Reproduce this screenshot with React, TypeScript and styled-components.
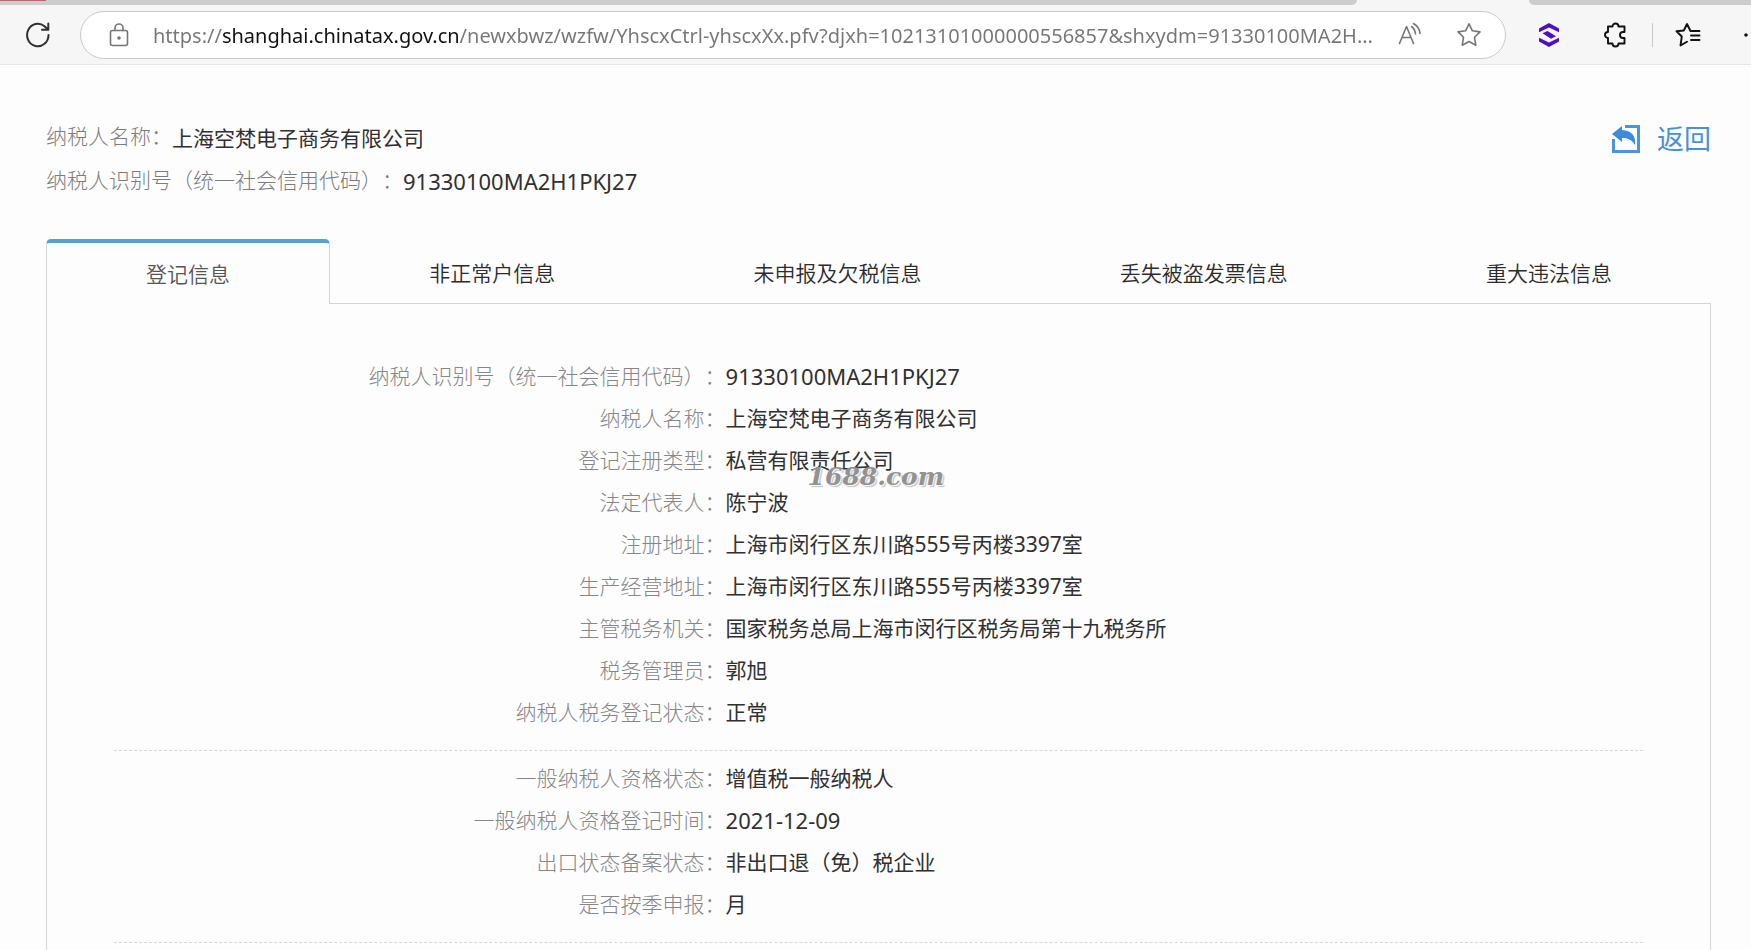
import React from "react";
import styled, { createGlobalStyle } from "styled-components";

const Global = createGlobalStyle`
  *, *::before, *::after { box-sizing: border-box; }
  html, body { margin: 0; }
  body {
    background: #fdfdfd;
    color: #303030;
    font-family: "Noto Sans", "Noto Sans CJK SC", sans-serif;
    font-size: 21px;
    line-height: 42px;
    text-spacing-trim: space-all;
    overflow: hidden;
  }
`;

const Window = styled.div`
  display: flex;
  flex-direction: column;
  height: 100vh;
  overflow: hidden;
`;

const TabStrip = styled.div`
  display: flex;
  justify-content: space-between;
  flex: none;
  height: 5px;
  background: #f6f6f6;
`;

const StripPiece = styled.div<{ $side: "left" | "right" }>`
  width: ${(p) => (p.$side === "left" ? "77.5%" : "12.7%")};
  background: #cdcdcd;
  border-radius: ${(p) => (p.$side === "left" ? "0 0 5px 0" : "0 0 0 5px")};
`;

const RedEdge = styled.div`
  width: 46px;
  height: 1px;
  background: #b9686c;
`;

const Toolbar = styled.header`
  display: flex;
  align-items: center;
  flex: none;
  height: 60px;
  padding: 0 0 0 26px;
  background: #f6f6f6;
  border-bottom: 1px solid #e6e6e6;
  overflow: hidden;
`;

const IconButton = styled.button`
  display: flex;
  flex: none;
  padding: 0;
  border: 0;
  background: none;
  color: inherit;
  cursor: pointer;
`;

const AddressBar = styled.div`
  display: flex;
  align-items: center;
  flex: 1;
  min-width: 0;
  height: 48px;
  margin: 0 33px 0 30px;
  padding: 0 23px 0 28px;
  gap: 24px;
  color: #767676;
  background: #fff;
  border: 1px solid #cacaca;
  border-radius: 24px;
`;

const AddressInput = styled.input`
  flex: 1;
  min-width: 0;
  height: 40px;
  padding: 2px 0 0;
  border: 0;
  outline: 0;
  font: inherit;
  font-size: 20px;
  text-overflow: ellipsis;
  color: #767676;
  background: linear-gradient(90deg, #767676 69px, #111 69px, #111 306px, #767676 306px);
  background-clip: text;
  -webkit-text-fill-color: transparent;
`;

const AddressActions = styled.div`
  display: flex;
  gap: 34px;
`;

const Extensions = styled.div`
  display: flex;
  align-items: center;
  flex: none;
  color: #111;
`;

const ExtensionSlot = styled.div<{ $width: number }>`
  display: flex;
  width: ${(p) => p.$width}px;
`;

const Separator = styled.span`
  width: 1px;
  height: 24px;
  background: #c8c8c8;
`;

const Page = styled.main`
  display: flex;
  flex-direction: column;
  flex: 1;
  padding: 50px 40px 0 46px;
`;

const Summary = styled.div`
  display: flex;
  justify-content: space-between;
  align-items: flex-start;
  margin-bottom: 36px;
`;

const SummaryList = styled.dl`
  margin: 0;
`;

const SummaryRow = styled.div`
  display: flex;
  height: 44px;
`;

const SummaryLabel = styled.dt`
  color: #7c7c7c;
  font-weight: 300;
`;

const SummaryValue = styled.dd<{ $code?: boolean }>`
  margin: 0;
  padding-top: ${(p) => (p.$code ? 1 : 2)}px;
  font-size: ${(p) => (p.$code ? 22 : 21)}px;
`;

const BackLink = styled.a`
  display: flex;
  align-items: center;
  gap: 17px;
  height: 48px;
  color: #4a90d9;
  font-size: 27px;
  text-decoration: none;
`;

const Tabs = styled.div`
  display: flex;
  height: 65px;
`;

const Tab = styled.button<{ $active?: boolean }>`
  flex: 1 1 auto;
  padding: ${(p) => (p.$active ? "0" : "4px 0 0")};
  font: inherit;
  font-weight: 350;
  line-height: 60px;
  color: ${(p) => (p.$active ? "#555" : "#2b2b2b")};
  background: none;
  border: 0 solid #d4d4d4;
  border-width: ${(p) => (p.$active ? "4px 1px 0" : "0 0 1px")};
  border-top-color: #5a9fd4;
  border-radius: ${(p) => (p.$active ? "5px 5px 0 0" : "0")};
  cursor: pointer;
`;

const Panel = styled.section`
  flex: 1;
  padding: 45px 67px 0;
  border: solid #d4d4d4;
  border-width: 0 1px;
`;

const Group = styled.dl`
  margin: 0;
  padding: 6px 0 17px;
  border-bottom: 1px dashed #d8d8d8;
`;

const Row = styled.div`
  display: grid;
  grid-template-columns: 40% 1fr;
  height: 42px;
`;

const Label = styled.dt`
  text-align: right;
  color: #868686;
  font-weight: 300;
  white-space: nowrap;
`;

const Value = styled.dd<{ $code?: boolean }>`
  position: relative;
  margin: 0;
  font-size: ${(p) => (p.$code ? 22 : 21)}px;
`;

const Watermark = styled.span`
  position: absolute;
  left: 82px;
  top: 17px;
  color: #929292;
  font: italic bold 25px/42px "DejaVu Serif", serif;
  text-shadow: 1px 1px 1px #fff, 2px 2px 1px #bbb;
  pointer-events: none;
`;

const stroke = { fill: "none", stroke: "currentColor", strokeWidth: 1.6, strokeLinejoin: "round", strokeLinecap: "round" } as const;

const groups: { label: string; value: string; code?: boolean; mark?: string }[][] = [
  [
    { label: "纳税人识别号（统一社会信用代码）：", value: "91330100MA2H1PKJ27", code: true },
    { label: "纳税人名称：", value: "上海空梵电子商务有限公司" },
    { label: "登记注册类型：", value: "私营有限责任公司", mark: "1688.com" },
    { label: "法定代表人：", value: "陈宁波" },
    { label: "注册地址：", value: "上海市闵行区东川路555号丙楼3397室" },
    { label: "生产经营地址：", value: "上海市闵行区东川路555号丙楼3397室" },
    { label: "主管税务机关：", value: "国家税务总局上海市闵行区税务局第十九税务所" },
    { label: "税务管理员：", value: "郭旭" },
    { label: "纳税人税务登记状态：", value: "正常" },
  ],
  [
    { label: "一般纳税人资格状态：", value: "增值税一般纳税人" },
    { label: "一般纳税人资格登记时间：", value: "2021-12-09", code: true },
    { label: "出口状态备案状态：", value: "非出口退（免）税企业" },
    { label: "是否按季申报：", value: "月" },
  ],
];

const tabs = ["登记信息", "非正常户信息", "未申报及欠税信息", "丢失被盗发票信息", "重大违法信息"];

export default function App() {
  return (
    <Window>
      <Global />
      <TabStrip>
        <StripPiece $side="left"><RedEdge /></StripPiece>
        <StripPiece $side="right" />
      </TabStrip>
      <Toolbar>
        <IconButton aria-label="刷新">
          <svg width="24" height="26" viewBox="0 0 24 26" {...stroke} strokeWidth={2}>
            <path d="M22.5 13A10.7 11.3 0 1 1 18.5 4.2L22 7.5M22.3 1.5V7.8H16" />
          </svg>
        </IconButton>
        <AddressBar>
          <svg width="20" height="24" viewBox="0 0 20 24" {...stroke}>
            <rect x="1.5" y="7.5" width="17" height="15" rx="2" />
            <path d="M6 7.5V5a4 4 0 0 1 8 0V7.5" />
            <circle cx="10" cy="15" r="1" fill="currentColor" />
          </svg>
          <AddressInput
            aria-label="地址"
            defaultValue="https://shanghai.chinatax.gov.cn/newxbwz/wzfw/YhscxCtrl-yhscxXx.pfv?djxh=10213101000000556857&shxydm=91330100MA2H..."
          />
          <AddressActions>
            <IconButton aria-label="朗读">
              <svg width="24" height="24" viewBox="0 0 24 24" {...stroke}>
                <path d="M1.5 21.5L8.5 4.5L15.5 21.5M4 15.5H13M13.5 4.5Q17 7 17.5 12M15.5 1.5Q21.5 5 22 11.5" />
              </svg>
            </IconButton>
            <IconButton aria-label="收藏">
              <svg width="26" height="26" viewBox="0 0 26 26" {...stroke}>
                <path d="M13 1.8L16.4 8.8L24 9.9L18.5 15.3L19.8 23.2L13 19.5L6.2 23.2L7.5 15.3L2 9.9L9.6 8.8Z" />
              </svg>
            </IconButton>
          </AddressActions>
        </AddressBar>
        <Extensions>
          <ExtensionSlot $width={65}>
            <IconButton aria-label="扩展">
              <svg width="20" height="24" viewBox="0 0 20 24" fill="#4b12c4">
                <path d="M0 5.5L10 0L20 5.5V9.2L10 4.5L0 9.2ZM0 14.8L10 19.5L20 14.8V18.5L10 24L0 18.5ZM3.500 10.200L8.500 8L17 13.300L12 15.800Z" />
              </svg>
            </IconButton>
          </ExtensionSlot>
          <ExtensionSlot $width={48}>
            <IconButton aria-label="扩展管理">
              <svg width="23" height="26" viewBox="0 0 23 26" {...stroke} strokeWidth={1.9}>
                <path d="M4 4.500H8.500A3 3 0 0 1 14.500 4.500H20.500V10H19A2.900 2.900 0 0 0 19 16H20.500V21.500H14.500A3 3 0 0 1 8.500 21.500H4V16A3 3 0 0 1 4 10Z" />
              </svg>
            </IconButton>
          </ExtensionSlot>
          <ExtensionSlot $width={23}><Separator /></ExtensionSlot>
          <ExtensionSlot $width={69}>
            <IconButton aria-label="收藏夹">
              <svg width="26" height="26" viewBox="0 0 26 26" {...stroke} strokeWidth={1.9}>
                <path d="M24.500 9H15.500L12 2L8.800 8.500L1.500 9.300L6.800 14.500L5.500 23.500L12 19.700M16 13.500H24.500M16 18H24.500" />
              </svg>
            </IconButton>
          </ExtensionSlot>
          <ExtensionSlot $width={7}>
            <IconButton aria-label="更多">
              <svg width="20" height="4" viewBox="0 0 20 4" fill="currentColor">
                <circle cx="2" cy="2" r="1.800" />
                <circle cx="10" cy="2" r="1.800" />
                <circle cx="18" cy="2" r="1.800" />
              </svg>
            </IconButton>
          </ExtensionSlot>
        </Extensions>
      </Toolbar>
      <Page>
        <Summary>
          <SummaryList>
            <SummaryRow>
              <SummaryLabel>纳税人名称：</SummaryLabel>
              <SummaryValue>上海空梵电子商务有限公司</SummaryValue>
            </SummaryRow>
            <SummaryRow>
              <SummaryLabel>纳税人识别号（统一社会信用代码）：</SummaryLabel>
              <SummaryValue $code>91330100MA2H1PKJ27</SummaryValue>
            </SummaryRow>
          </SummaryList>
          <BackLink href="#">
            <svg width="28" height="28" viewBox="0 0 28 28">
              <path d="M13 1.500H26.500V26.500H1.500V14" fill="none" stroke="#4a94dc" strokeWidth="3" />
              <path d="M0 9L10 1V5C19 5.500 24.500 11 23 20C19.500 14.500 15.500 13 10 13V17Z" fill="#3a8bdb" />
            </svg>
            返回
          </BackLink>
        </Summary>
        <Tabs role="tablist">
          {tabs.map((t, i) => (
            <Tab key={t} role="tab" aria-selected={i === 0} $active={i === 0}>{t}</Tab>
          ))}
        </Tabs>
        <Panel>
          {groups.map((rows, i) => (
            <Group key={i}>
              {rows.map((r) => (
                <Row key={r.label}>
                  <Label>{r.label}</Label>
                  <Value $code={r.code}>
                    {r.value}
                    {r.mark && <Watermark>{r.mark}</Watermark>}
                  </Value>
                </Row>
              ))}
            </Group>
          ))}
        </Panel>
      </Page>
    </Window>
  );
}
